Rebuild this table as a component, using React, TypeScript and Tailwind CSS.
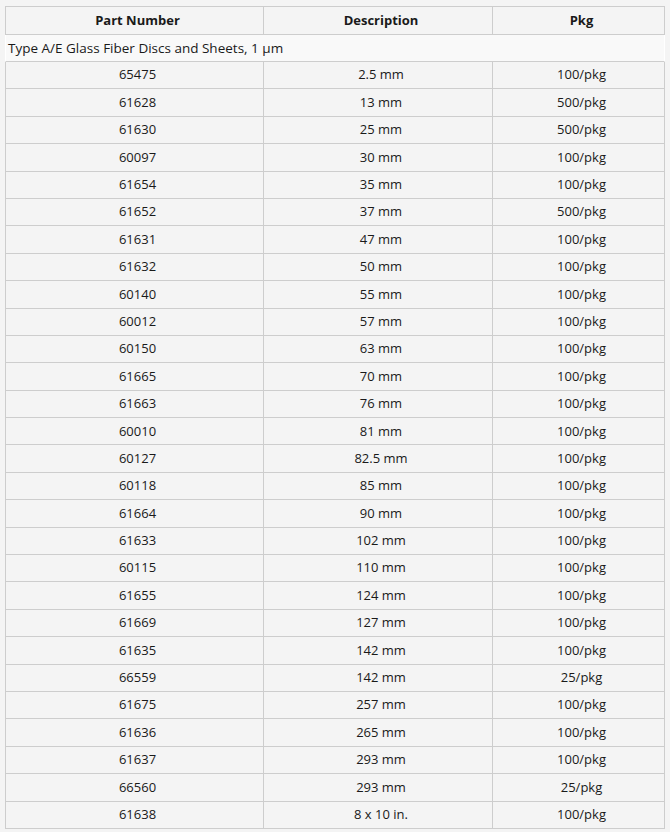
import React from "react";

const rows: [string, string, string][] = [
  ["65475", "2.5 mm", "100/pkg"],
  ["61628", "13 mm", "500/pkg"],
  ["61630", "25 mm", "500/pkg"],
  ["60097", "30 mm", "100/pkg"],
  ["61654", "35 mm", "100/pkg"],
  ["61652", "37 mm", "500/pkg"],
  ["61631", "47 mm", "100/pkg"],
  ["61632", "50 mm", "100/pkg"],
  ["60140", "55 mm", "100/pkg"],
  ["60012", "57 mm", "100/pkg"],
  ["60150", "63 mm", "100/pkg"],
  ["61665", "70 mm", "100/pkg"],
  ["61663", "76 mm", "100/pkg"],
  ["60010", "81 mm", "100/pkg"],
  ["60127", "82.5 mm", "100/pkg"],
  ["60118", "85 mm", "100/pkg"],
  ["61664", "90 mm", "100/pkg"],
  ["61633", "102 mm", "100/pkg"],
  ["60115", "110 mm", "100/pkg"],
  ["61655", "124 mm", "100/pkg"],
  ["61669", "127 mm", "100/pkg"],
  ["61635", "142 mm", "100/pkg"],
  ["66559", "142 mm", "25/pkg"],
  ["61675", "257 mm", "100/pkg"],
  ["61636", "265 mm", "100/pkg"],
  ["61637", "293 mm", "100/pkg"],
  ["66560", "293 mm", "25/pkg"],
  ["61638", "8 x 10 in.", "100/pkg"],
];

export default function App() {
  return (
    <div
      className="w-[670px] h-[832px] bg-[#f4f4f4] pt-[6px] pl-[5px] text-[13px] text-[#1a1a1a]"
      style={{ fontFamily: '"Open Sans", "Noto Sans", sans-serif' }}
    >
      <div className="w-[660px] border-t border-[#cdcdcd]">
        <div className="grid grid-cols-[258px_229px_173px] h-[28px] border-b border-[#cdcdcd] font-bold">
          <div className="flex items-center justify-center pl-[6px] border-l border-[#cdcdcd]">Part Number</div>
          <div className="flex items-center justify-center pl-[6px] border-l border-[#cdcdcd]">Description</div>
          <div className="flex items-center justify-center pl-[6px] border-x border-[#cdcdcd]">Pkg</div>
        </div>
        <div className="h-[27px] flex items-center pl-[2px] text-[13.5px] bg-[#f9f9f9] border-x border-white border-b border-b-[#cdcdcd]">
          Type A/E Glass Fiber Discs and Sheets, 1 µm
        </div>
        {rows.map((r) => (
          <div
            key={r[0] + r[1]}
            className="grid grid-cols-[258px_229px_173px] h-[27.4px] border-b border-[#cdcdcd]"
          >
            <div className="flex items-center justify-center pl-[6px] border-l border-[#cdcdcd]">{r[0]}</div>
            <div className="flex items-center justify-center pl-[6px] border-l border-[#cdcdcd]">{r[1]}</div>
            <div className="flex items-center justify-center pl-[6px] border-x border-[#cdcdcd]">{r[2]}</div>
          </div>
        ))}
      </div>
    </div>
  );
}
